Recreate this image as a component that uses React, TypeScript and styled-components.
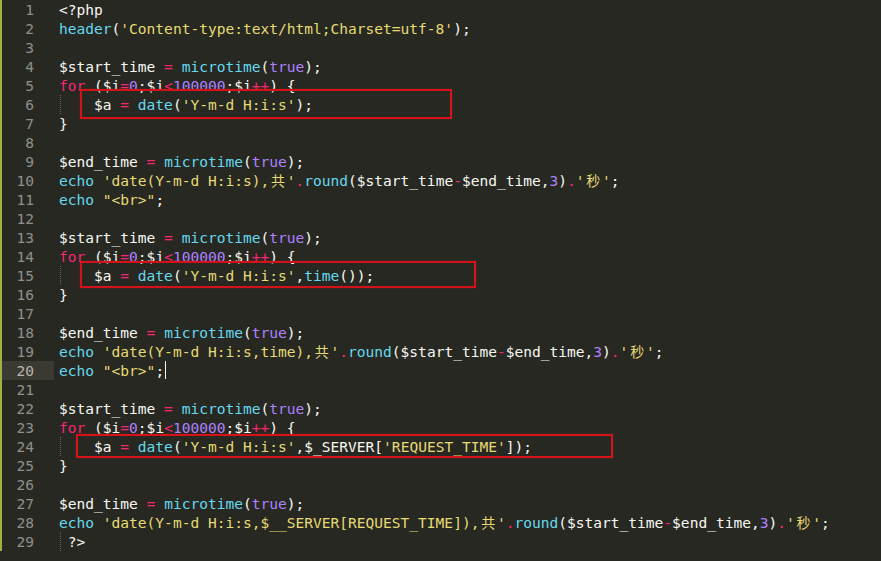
import React from "react";
import styled, { createGlobalStyle } from "styled-components";

const GlobalStyle = createGlobalStyle`
  html, body { margin: 0; padding: 0; background: #272822; }
  body { overflow: hidden; }
`;

const C = {
  t: "#f8f8f2",
  k: "#f92672",
  f: "#66d9ef",
  s: "#e6db74",
  n: "#ae81ff",
};

type Kind = keyof typeof C;
type Tok = [Kind, string];

const Editor = styled.div`
  position: relative;
  width: 881px;
  height: 561px;
  background: #272822;
  overflow: hidden;
  font-family: "DejaVu Sans Mono", "Liberation Mono", monospace;
  font-size: 14.55px;
`;

const Lines = styled.div`
  display: flex;
  flex-direction: column;
  border-left: 2px solid #9fb044;
`;

const Row = styled.div`
  display: grid;
  grid-template-columns: 52px 1fr;
  height: 19px;
  line-height: 19px;
  white-space: pre;
`;

const Num = styled.div<{ $active?: boolean }>`
  text-align: right;
  padding-right: 20px;
  color: ${(p) => (p.$active ? "#b5b5ae" : "#8f908a")};
  background: ${(p) => (p.$active ? "#3b3a32" : "transparent")};
`;

const Code = styled.div<{ $guide?: boolean }>`
  padding-left: 5px;
  color: #f8f8f2;
  background-image: ${(p) =>
    p.$guide ? "linear-gradient(#65655a 50%, transparent 50%)" : "none"};
  background-size: 1px 2px;
  background-repeat: repeat-y;
  background-position: 6px 0;
`;

const Tk = styled.span<{ $k: Kind }>`
  color: ${(p) => C[p.$k]};
`;

const Wide = styled.span`
  display: inline-block;
  width: 17.5px;
  text-align: center;
  vertical-align: top;
  font-family: "Noto Sans CJK SC", sans-serif;
  font-size: 14px;
  line-height: 19px;
`;

const Caret = styled.span`
  display: inline-block;
  width: 1px;
  height: 18px;
  margin-left: 1px;
  vertical-align: top;
  background: #f8f8f0;
`;

const Mark = styled.div`
  position: absolute;
  box-sizing: border-box;
  border: 2px solid #d4121a;
  box-shadow: 0 0 1px rgba(230, 20, 30, 0.6);
`;

const L = (...toks: Tok[]) => toks;
const t = (s: string): Tok => ["t", s];
const k = (s: string): Tok => ["k", s];
const f = (s: string): Tok => ["f", s];
const s = (x: string): Tok => ["s", x];
const n = (x: string): Tok => ["n", x];

const forLine = L(k("for"), t(" ($i"), k("="), n("0"), t(";$i"), k("<"), n("100000"), t(";$i"), k("++"), t(") {"));
const startLine = L(t("$start_time "), k("="), t(" "), f("microtime"), t("("), n("true"), t(");"));
const endLine = L(t("$end_time "), k("="), t(" "), f("microtime"), t("("), n("true"), t(");"));
const roundTail: Tok[] = [
  k("."), f("round"), t("($start_time"), k("-"), t("$end_time,"), n("3"), t(")"), k("."), s("'秒'"), t(";"),
];

const lines: Tok[][] = [
  L(t("<?php")),
  L(f("header"), t("("), s("'Content-type:text/html;Charset=utf-8'"), t(");")),
  [],
  startLine,
  forLine,
  L(t("    $a "), k("="), t(" "), f("date"), t("("), s("'Y-m-d H:i:s'"), t(");")),
  L(t("}")),
  [],
  endLine,
  [f("echo"), t(" "), s("'date(Y-m-d H:i:s),共'"), ...roundTail],
  L(f("echo"), t(" "), s("\"<br>\""), t(";")),
  [],
  startLine,
  forLine,
  L(t("    $a "), k("="), t(" "), f("date"), t("("), s("'Y-m-d H:i:s'"), t(","), f("time"), t("());")),
  L(t("}")),
  [],
  endLine,
  [f("echo"), t(" "), s("'date(Y-m-d H:i:s,time),共'"), ...roundTail],
  L(f("echo"), t(" "), s("\"<br>\""), t(";")),
  [],
  startLine,
  forLine,
  L(t("    $a "), k("="), t(" "), f("date"), t("("), s("'Y-m-d H:i:s'"), t(",$_SERVER["), s("'REQUEST_TIME'"), t("]);")),
  L(t("}")),
  [],
  endLine,
  [f("echo"), t(" "), s("'date(Y-m-d H:i:s,$__SERVER[REQUEST_TIME]),共'"), ...roundTail],
  L(t(" ?>")),
];

const guides = new Set([6, 15, 24, 29]);

function renderText(text: string) {
  const parts = text.split(/([共秒])/);
  return parts.map((p, i) =>
    p === "共" || p === "秒" ? <Wide key={i}>{p}</Wide> : p
  );
}

const marks = [
  { left: 80, top: 89, width: 372, height: 30 },
  { left: 80, top: 261, width: 396, height: 27 },
  { left: 76, top: 434, width: 537, height: 24 },
];

export default function App() {
  return (
    <>
      <GlobalStyle />
      <Editor>
        <Lines>
          {lines.map((toks, i) => {
            const no = i + 1;
            return (
              <Row key={no}>
                <Num $active={no === 20}>{no}</Num>
                <Code $guide={guides.has(no)}>
                  {toks.map(([kind, text], j) => (
                    <Tk key={j} $k={kind}>
                      {renderText(text)}
                    </Tk>
                  ))}
                  {no === 20 && <Caret />}
                </Code>
              </Row>
            );
          })}
        </Lines>
        {marks.map((m, i) => (
          <Mark key={i} style={m} />
        ))}
      </Editor>
    </>
  );
}
